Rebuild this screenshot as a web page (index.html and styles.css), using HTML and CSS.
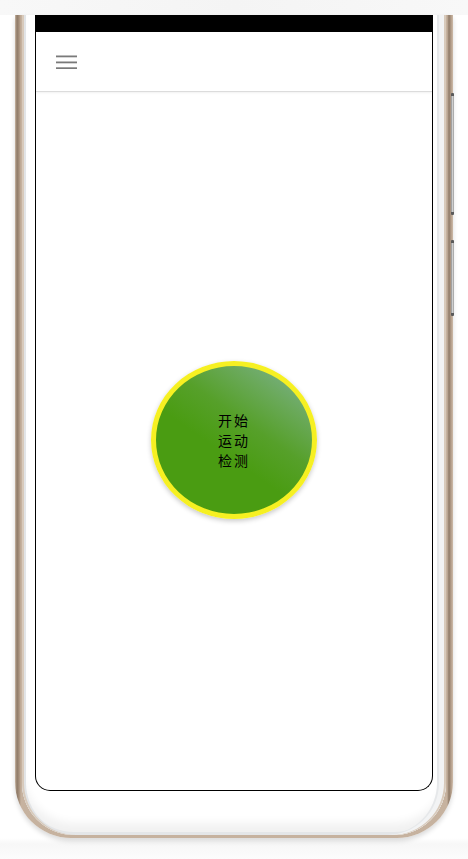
FILE: index.html
```html
<!DOCTYPE html>
<html lang="zh">
<head>
<meta charset="utf-8">
<title>运动检测</title>
<link rel="stylesheet" href="styles.css">
</head>
<body>
<div class="page">
  <div class="topband"></div>
  <div class="phone">
    <span class="side-btn btn-a"></span>
    <span class="side-btn btn-b"></span>
    <div class="bezel">
      <div class="screen">
        <div class="statusbar"></div>
        <header class="appbar">
          <svg class="menu" width="21" height="14" viewBox="0 0 21 14">
            <rect x="0" y="0.5" width="21" height="1.8" fill="#7a7a7a"/>
            <rect x="0" y="6.5" width="21" height="1.8" fill="#7a7a7a"/>
            <rect x="0" y="12.3" width="21" height="1.8" fill="#7a7a7a"/>
          </svg>
        </header>
        <main class="content">
          <button class="start">开始<br>运动<br>检测</button>
        </main>
      </div>
    </div>
  </div>
</div>
</body>
</html>
```
FILE: styles.css
```css
html, body {
  margin: 0;
  padding: 0;
  background: #ffffff;
}
.page {
  width: 468px;
  height: 859px;
  overflow: hidden;
  background: linear-gradient(#ffffff 0, #ffffff 838px, #f7f7f7 844px, #fcfcfc 859px);
}
.topband {
  height: 15px;
  background: linear-gradient(90deg, #f8f8f8, #f4f4f4 50%, #f8f8f8);
}
.phone {
  position: relative;
  margin-left: 15px;
  width: 438px;
  height: 823px;
  box-sizing: border-box;
  padding: 0 7px 3px 7px;
  border-radius: 0 0 56px 56px;
  background: linear-gradient(90deg, #c9b6a3 0, #8e7a68 2px, #a48e7a 4px, #c6b29f 6px, #c6b29f 432px, #8e7a68 434px, #b39d89 436px, #cdbba9 438px);
  box-shadow: 0 3px 5px rgba(0,0,0,0.15);
}
.side-btn {
  position: absolute;
  left: 436px;
  width: 3px;
  box-sizing: border-box;
  background: linear-gradient(90deg, #8a8a8a, #cfcfcf 50%, #9a9a9a);
  border-top: 3px solid #5a5a5a;
  border-bottom: 3px solid #5a5a5a;
  border-radius: 1px;
}
.btn-a { top: 78px; height: 122px; }
.btn-b { top: 225px; height: 76px; }
.bezel {
  height: 100%;
  box-sizing: border-box;
  padding: 0 13px 44px 13px;
  border-radius: 0 0 52px 52px;
  background: #ffffff;
  box-shadow:
    inset 2px 0 0 #d8cabb,
    inset 4px 0 0 #e2e4e6,
    inset -2px 0 0 #d8cabb,
    inset -7px 0 0 #f2f3f4,
    inset -9px 0 0 #e6e8ea,
    inset 0 -3px 0 #e4e6e8,
    inset 0 -12px 10px rgba(0,0,0,0.06);
}
.screen {
  height: 100%;
  box-sizing: border-box;
  border: 1px solid #000;
  border-top: none;
  border-radius: 0 0 15px 15px;
  overflow: hidden;
  background: #fff;
  display: flex;
  flex-direction: column;
}
.statusbar {
  height: 17px;
  background: #000;
  flex: none;
}
.appbar {
  height: 60px;
  flex: none;
  box-sizing: border-box;
  padding-left: 20px;
  display: flex;
  align-items: center;
  border-bottom: 1px solid #dcdcdc;
  box-shadow: 0 1px 2px rgba(0,0,0,0.06);
}
.menu {
  display: block;
}
.content {
  flex: 1;
  display: flex;
  align-items: center;
  justify-content: center;
  padding-bottom: 3px;
}
.start {
  width: 166px;
  height: 158px;
  box-sizing: border-box;
  border: 5px solid #f6f022;
  border-radius: 50%;
  background: linear-gradient(215deg, #80b39c 0%, #6aa95a 22%, #56a02a 40%, #4a9c12 58%, #4a9c12 100%);
  box-shadow: 0 2px 5px rgba(0,0,0,0.22);
  color: #000;
  font-family: "Noto Sans CJK SC", "Noto Sans", sans-serif;
  font-size: 14px;
  line-height: 20px;
  letter-spacing: 2px;
  padding: 0;
  cursor: pointer;
}
```
